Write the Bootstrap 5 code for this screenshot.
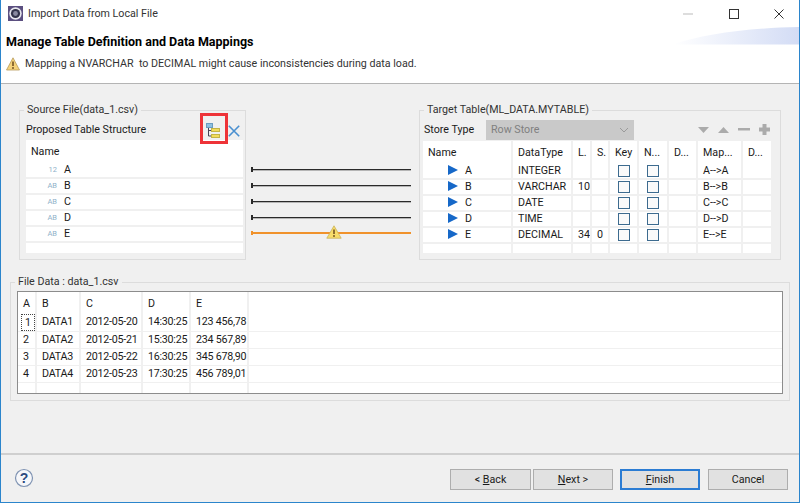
<!DOCTYPE html>
<html lang="en">
<head>
    <meta charset="UTF-8">
    <meta name="viewport" content="width=device-width, initial-scale=1.0">
    <title>Import Data from Local File</title>
    <link href="https://cdn.jsdelivr.net/npm/bootstrap@5.3.0/dist/css/bootstrap.min.css" rel="stylesheet">
    <style>
        html, body { height: 100%; overflow: hidden; }
        body { font-family: Roboto, "Liberation Sans", sans-serif; font-size: 10.7px; line-height: 16px; color: #1a1a1a; background: #fff; }

        .wiz-window { width: 800px; height: 503px; border: 1px solid #2b85cc; border-top: 0; }
        .wiz-titlebar { height: 27px; padding-left: 7px; }
        .wiz-title { margin-left: 5px; color: #333; }
        .wiz-ctrls { width: 116px; padding-right: 15px; }
        .wiz-header { height: 57px; border-bottom: 1px solid #b4b4b4; padding: 7px 0 0 5px; }
        .wiz-banner { position: absolute; right: 0; top: 0; }
        .wiz-heading { font-size: 12.5px; font-weight: 700; margin: 0 0 6px; color: #000; line-height: 16px; }
        .wiz-msg { gap: 5px; color: #333; }

        .wiz-body { background: #f0f0f0; height: 369px; padding: 18px 0 0 9px; }
        .wiz-group { border: 1px solid #dcdcdc; margin: 0; min-width: 0; }
        .wiz-group legend { float: none; width: auto; font-size: 10.7px; line-height: 16px; margin: 0 0 0 -2px; padding: 0 3px; color: #333; }

        .src-group { width: 227px; margin-left: 9px; height: 158px; padding: 0 2px 0 6px; }
        .src-bar { height: 22px; position: relative; padding-top: 2px; }
        .src-mark { position: absolute; left: 174px; top: -5px; width: 28px; height: 31px; border: 3px solid #ee3338; z-index: 2; }
        .src-tools { gap: 7px; padding: 1px 3px 0 0; }

        .link-col { width: 173px; padding: 59px 8px 0 5px; }
        .link-row { height: 16px; position: relative; }
        .link-line { height: 1px; width: 100%; background: #2a2a2a; position: relative; box-shadow: 0 1px 0 #b5b5b5; }
        .link-line::before { content: ""; position: absolute; left: 0; top: -2px; width: 2px; height: 5px; background: #2a2a2a; }
        .link-warn { height: 2px; background: #f0922b; box-shadow: none; }
        .link-warn::before { background: #f0922b; top: -1px; height: 4px; }
        .link-icon { position: absolute; left: 75px; top: 0; }

        .tgt-group { width: 362px; height: 158px; padding: 0 0 0 3px; }
        .tgt-group legend { margin-left: 1px; }
        .tgt-bar { height: 23px; padding-left: 1px; }
        .tgt-label { width: 62px; margin-top: 1px; }
        .tgt-select { width: 148px; height: 20px; padding: 0 5px; background: #c9c9c9; line-height: 20px; color: #808080; }
        .tgt-tools { margin-left: 64px; gap: 9px; }

        .sheet-wrap { background: #fff; }
        .sheet-src { width: 217px; height: 113px; }
        .sheet-tgt { width: 352px; height: 112px; }
        .sheet { table-layout: fixed; width: 100%; margin: 0; --bs-table-bg: transparent; --bs-table-color: #1a1a1a; border-color: #f0f0f0; font-size: 10.7px; }
        .sheet > :not(caption) > * > * { padding: 0 0 0 5px; border: 0; box-shadow: none; white-space: nowrap; overflow: hidden; font-weight: 400; line-height: 14px; vertical-align: middle; }
        .sheet > thead > tr > th { padding-top: 2px; }
        .sheet tbody tr { height: 16px; }
        .sheet tbody td { border-bottom: 2px solid #f0f0f0; }
        .sheet-src thead tr { height: 22px; }
        .sheet-src .blank-row td { border: 0; height: 11px; }
        .type-tag { display: inline-block; width: 18px; height: 14px; margin-left: 8px; text-align: right; font-size: 7.5px; line-height: 14px; color: #8fb1c9; vertical-align: top; }
        .col-name { display: inline-block; height: 14px; margin-left: 7px; vertical-align: top; }

        .sheet-tgt thead tr { height: 22px; }
        .sheet-tgt th, .sheet-tgt td { border-right: 2px solid #f0f0f0 !important; }
        .sheet-tgt .blank-row td { border-bottom: 0; height: 10px; }
        .play-mark { margin-left: 20px; margin-right: 7px; vertical-align: -1px; }
        .sheet > tbody > tr > td.box-cell { padding: 0; }
        .box-check.form-check-input[type=checkbox] { width: 12px; height: 12px; border-radius: 0; border: 1px solid #3d6b8f; background-color: #fafafa; display: block; margin: 0 auto; }
        .box-check:disabled { opacity: 1; }

        .data-group { width: 780px; height: 127px; padding: 0 6px; }
        .data-sheet-box { height: 103px; border: 1px solid #8c8c8c; background: #fff; margin-top: 1px; overflow: hidden; }
        .data-sheet { width: 766px; }
        .data-sheet thead tr { height: 22px; }
        .data-sheet tbody tr { height: 17px; }
        .data-sheet th, .data-sheet td { border-right: 2px solid #f0f0f0 !important; }
        .data-sheet tbody td { border-bottom: 1px solid #f0f0f0; letter-spacing: -.25px; }
        .data-sheet .blank-row td { border-bottom: 0; height: 11px; }
        .cell-focus { outline: 1px dotted #444; padding: 0 3px; margin-left: -1px; display: inline-block; line-height: 15px; }

        .gap-top { margin-top: 14px; }

        .wiz-footer { height: 49px; background: #f0f0f0; border-top: 2px solid #cfcfcf; padding: 14px 11px 0 13px; }
        .wiz-help { margin-top: -1px; }
        .wiz-btn { width: 80px; height: 21px; padding: 0; border: 1px solid #adadad; border-radius: 0; background: #e1e1e1; color: #1a1a1a; font-size: 10.7px; line-height: 18px; }
        .wiz-btn-main { border: 2px solid #2b7cd3; line-height: 17px; }
        .btn-back { width: 81px; }
        .btn-next { margin: 0 7px 0 2px; }
        .btn-last { margin-left: 8px; }
    </style>
</head>
<body>
    <div class="wiz-window d-flex flex-column">
        <!-- title bar -->
        <div class="wiz-titlebar d-flex align-items-center justify-content-between">
            <div class="d-flex align-items-center">
                <svg width="15" height="15" viewBox="0 0 15 15">
                    <rect x="0" y="0" width="15" height="15" fill="#5b4f80"/>
                    <circle cx="7.5" cy="7.5" r="6.2" fill="#e8e8ee"/>
                    <circle cx="7.5" cy="7.5" r="4.6" fill="#33334a"/>
                    <circle cx="7.5" cy="7.5" r="2.4" fill="#8a8aa0"/>
                </svg>
                <span class="wiz-title">Import Data from Local File</span>
            </div>
            <div class="wiz-ctrls d-flex align-items-center justify-content-between">
                <svg width="10" height="10" viewBox="0 0 10 10"><path d="M0 5h10" stroke="#cfcfcf" stroke-width="1.4"/></svg>
                <svg width="10" height="10" viewBox="0 0 10 10"><rect x=".5" y=".5" width="9" height="9" fill="none" stroke="#333"/></svg>
                <svg width="10" height="10" viewBox="0 0 10 10"><path d="M.5.5l9 9M9.5.5l-9 9" stroke="#333" stroke-width="1"/></svg>
            </div>
        </div>

        <!-- page header -->
        <div class="wiz-header position-relative">
            <svg class="wiz-banner" width="126" height="18" viewBox="0 0 126 18">
                <defs>
                    <linearGradient id="bannerFade" x1="0" x2="1" y1="0" y2="0">
                        <stop offset="0" stop-color="#ffffff"/>
                        <stop offset="1" stop-color="#d3dcf5"/>
                    </linearGradient>
                </defs>
                <path d="M0 17.500C30 7 75 1 126 0V17.500Z" fill="url(#bannerFade)"/>
            </svg>
            <h1 class="wiz-heading">Manage Table Definition and Data Mappings</h1>
            <div class="wiz-msg d-flex align-items-center">
                <svg width="14" height="14" viewBox="0 0 14 14">
                    <path d="M7 .8L13.500 13H.5Z" fill="#f5d27a" stroke="#b89a5a" stroke-width=".8" stroke-linejoin="round"/>
                    <path d="M7 4.500v4.500" stroke="#6b4a1c" stroke-width="1.500"/>
                    <circle cx="7" cy="11" r=".9" fill="#6b4a1c"/>
                </svg>
                <span>Mapping a NVARCHAR&nbsp; to DECIMAL might cause inconsistencies during data load.</span>
            </div>
        </div>

        <!-- page body -->
        <div class="wiz-body">
            <div class="d-flex">
                <fieldset class="wiz-group src-group">
                    <legend>Source File(data_1.csv)</legend>
                    <div class="src-bar d-flex align-items-center justify-content-between">
                        <span>Proposed Table Structure</span>
                        <span class="src-mark"></span>
                        <div class="src-tools d-flex align-items-center">
                            <svg width="15" height="15" viewBox="0 0 15 15">
                                <rect x=".5" y=".5" width="6" height="4" fill="#8cbfe0" stroke="#6a9cc0"/>
                                <path d="M2.500 5v8h3M2.500 7.500h3" fill="none" stroke="#445"/>
                                <rect x="5.500" y="5.500" width="8" height="3" fill="#f2dc5a" stroke="#c4b445"/>
                                <rect x="5.500" y="11.500" width="8" height="3" fill="#f2dc5a" stroke="#c4b445"/>
                            </svg>
                            <svg width="12" height="12" viewBox="0 0 12 12"><path d="M.8.8l10.400 10.400M11.200.8L.8 11.200" stroke="#4a90d0" stroke-width="1.600"/></svg>
                        </div>
                    </div>
                    <div class="sheet-wrap sheet-src">
                        <table class="table sheet">
                            <thead><tr><th>Name</th></tr></thead>
                            <tbody id="srcRows"></tbody>
                        </table>
                    </div>
                </fieldset>

                <div class="link-col" id="linkCol"></div>

                <fieldset class="wiz-group tgt-group">
                    <legend>Target Table(ML_DATA.MYTABLE)</legend>
                    <div class="tgt-bar d-flex align-items-center">
                        <span class="tgt-label">Store Type</span>
                        <div class="tgt-select d-flex align-items-center justify-content-between">
                            <span>Row Store</span>
                            <svg width="10" height="6" viewBox="0 0 10 6"><path d="M1 1l4 4 4-4" fill="none" stroke="#9a9a9a"/></svg>
                        </div>
                        <div class="tgt-tools d-flex align-items-center">
                            <svg width="11" height="6" viewBox="0 0 11 6"><path d="M0 0h11L5.500 6Z" fill="#ababab"/></svg>
                            <svg width="11" height="6" viewBox="0 0 11 6"><path d="M0 6h11L5.500 0Z" fill="#ababab"/></svg>
                            <svg width="12" height="3" viewBox="0 0 12 3"><rect width="12" height="2.500" fill="#ababab"/></svg>
                            <svg width="11" height="11" viewBox="0 0 11 11"><path d="M3.500 0h4v3.500H11v4H7.500V11h-4V7.500H0v-4h3.500Z" fill="#ababab"/></svg>
                        </div>
                    </div>
                    <div class="sheet-wrap sheet-tgt">
                        <table class="table sheet">
                            <colgroup>
                                <col style="width:89px"><col style="width:60px"><col style="width:19px"><col style="width:18px"><col style="width:29px"><col style="width:30px"><col style="width:29px"><col style="width:45px"><col style="width:30px"><col>
                            </colgroup>
                            <thead><tr><th>Name</th><th>DataType</th><th>L.</th><th>S.</th><th>Key</th><th>N...</th><th>D...</th><th>Map...</th><th>D...</th><th></th></tr></thead>
                            <tbody id="tgtRows"></tbody>
                        </table>
                    </div>
                </fieldset>
            </div>

            <fieldset class="wiz-group data-group gap-top">
                <legend>File Data : data_1.csv</legend>
                <div class="data-sheet-box">
                    <table class="table sheet data-sheet">
                        <colgroup>
                            <col style="width:18px"><col style="width:44px"><col style="width:62px"><col style="width:48px"><col style="width:58px"><col>
                        </colgroup>
                        <thead><tr><th>A</th><th>B</th><th>C</th><th>D</th><th>E</th><th></th></tr></thead>
                        <tbody id="dataRows"></tbody>
                    </table>
                </div>
            </fieldset>
        </div>

        <!-- buttons -->
        <div class="wiz-footer d-flex align-items-start align-self-stretch">
            <svg class="wiz-help" width="20" height="20" viewBox="0 0 20 20">
                <circle cx="10" cy="10" r="8.500" fill="#f6f7fa" stroke="#7f93b2" stroke-width="1.200"/>
                <text x="10" y="15" text-anchor="middle" font-family="Liberation Sans, sans-serif" font-size="14" font-weight="700" fill="#2d4a80">?</text>
            </svg>
            <div class="d-flex ms-auto">
                <button type="button" class="btn wiz-btn btn-back">&lt; <u>B</u>ack</button>
                <button type="button" class="btn wiz-btn btn-next"><u>N</u>ext &gt;</button>
                <button type="button" class="btn wiz-btn wiz-btn-main"><u>F</u>inish</button>
                <button type="button" class="btn wiz-btn btn-last">Cancel</button>
            </div>
        </div>
    </div>

    <script src="https://cdn.jsdelivr.net/npm/bootstrap@5.3.0/dist/js/bootstrap.bundle.min.js"></script>
    <script>
        const columns = [
            { name: 'A', tag: '12', type: 'INTEGER', len: '', scale: '' },
            { name: 'B', tag: 'AB', type: 'VARCHAR', len: '10', scale: '' },
            { name: 'C', tag: 'AB', type: 'DATE', len: '', scale: '' },
            { name: 'D', tag: 'AB', type: 'TIME', len: '', scale: '' },
            { name: 'E', tag: 'AB', type: 'DECIMAL', len: '34', scale: '0' }
        ];
        const fileRows = [
            ['1', 'DATA1', '2012-05-20', '14:30:25', '123 456,78'],
            ['2', 'DATA2', '2012-05-21', '15:30:25', '234 567,89'],
            ['3', 'DATA3', '2012-05-22', '16:30:25', '345 678,90'],
            ['4', 'DATA4', '2012-05-23', '17:30:25', '456 789,01']
        ];
        const warnIcon = `<svg class="link-icon" width="16" height="14" viewBox="0 0 16 14">
            <path d="M8 .8L15.200 13.200H.8Z" fill="#f7dc6a" stroke="#c9b25a" stroke-width=".8" stroke-linejoin="round"/>
            <path d="M8 4.500v4.500" stroke="#6b4a1c" stroke-width="1.500"/><circle cx="8" cy="11" r=".9" fill="#6b4a1c"/></svg>`;

        document.getElementById('srcRows').innerHTML = columns.map(c =>
            `<tr><td><span class="type-tag">${c.tag}</span><span class="col-name">${c.name}</span></td></tr>`
        ).join('') + '<tr class="blank-row"><td></td></tr>';

        document.getElementById('linkCol').innerHTML = columns.map((c, i) =>
            `<div class="link-row d-flex align-items-center"><div class="link-line ${i === 4 ? 'link-warn' : ''}"></div>${i === 4 ? warnIcon : ''}</div>`
        ).join('');

        const check = '<input class="form-check-input box-check" type="checkbox" disabled>';
        document.getElementById('tgtRows').innerHTML = columns.map(c => `<tr>
            <td><svg class="play-mark" width="10" height="10" viewBox="0 0 10 10"><path d="M0 0l10 5-10 5Z" fill="#1668c8"/></svg>${c.name}</td>
            <td>${c.type}</td><td>${c.len}</td><td>${c.scale}</td>
            <td class="box-cell">${check}</td><td class="box-cell">${check}</td>
            <td></td><td>${c.name}--&gt;${c.name}</td><td></td><td></td></tr>`
        ).join('') + '<tr class="blank-row">' + '<td></td>'.repeat(10) + '</tr>';

        document.getElementById('dataRows').innerHTML = fileRows.map((r, i) => `<tr>
            ${r.map((v, j) => `<td>${i === 0 && j === 0 ? `<span class="cell-focus">${v}</span>` : v}</td>`).join('')}<td></td></tr>`
        ).join('') + '<tr class="blank-row">' + '<td></td>'.repeat(6) + '</tr>';
    </script>
</body>
</html>
